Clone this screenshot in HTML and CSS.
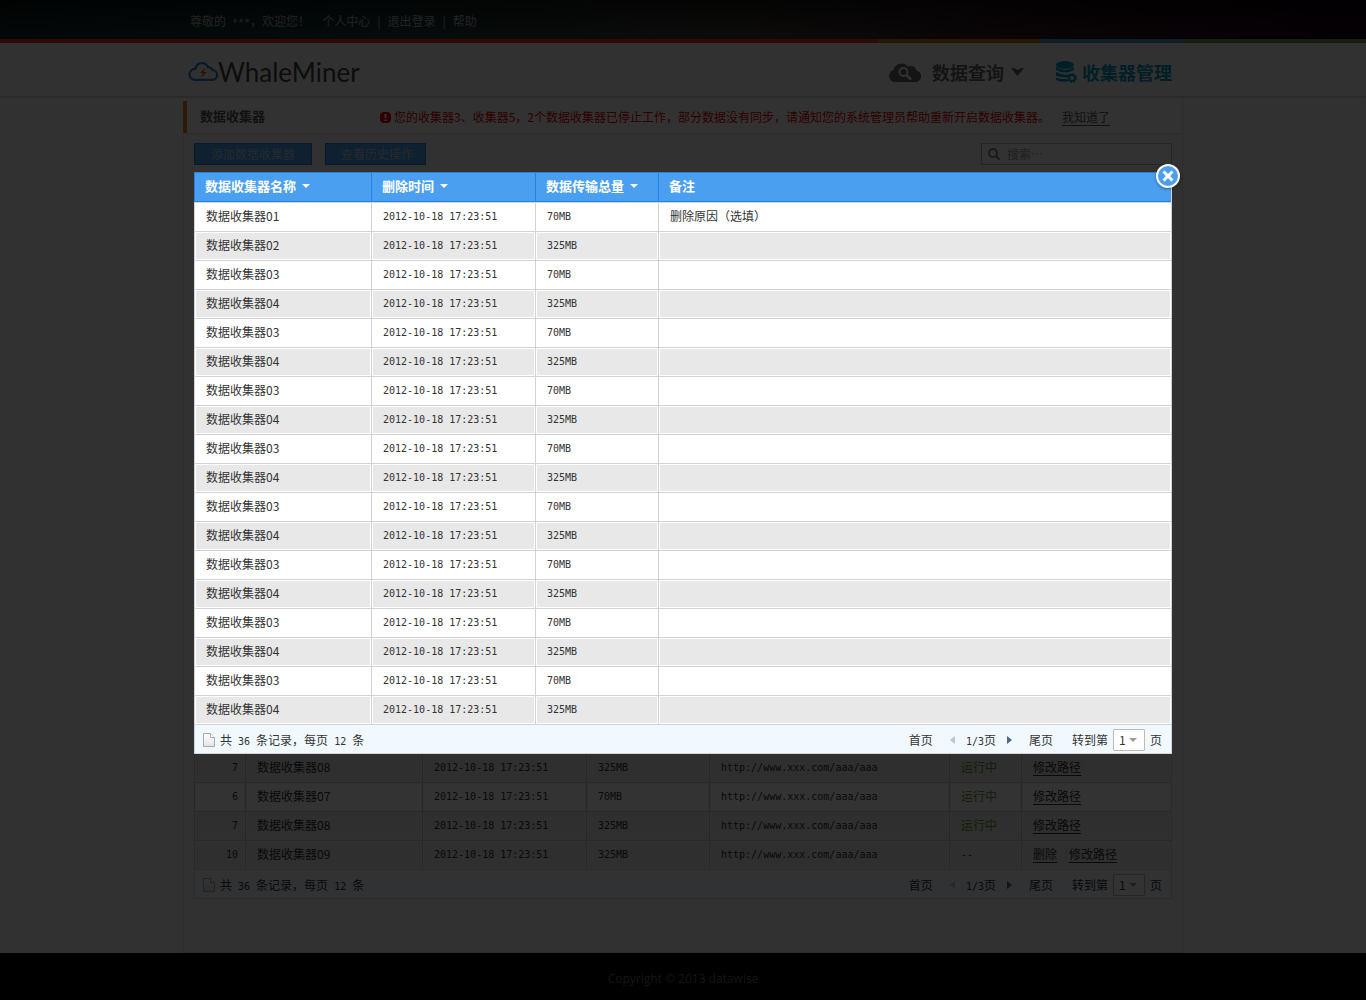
FILE: index.html
```html
<!DOCTYPE html>
<html lang="zh-CN">
<head>
<meta charset="utf-8">
<meta name="viewport" content="width=device-width, initial-scale=1">
<title>WhaleMiner</title>
<link rel="stylesheet" href="styles.css">
</head>
<body>
<svg class="defs" width="0" height="0" aria-hidden="true">
  <defs>
    <linearGradient id="paper" x1="0" y1="0" x2="0" y2="1"><stop offset="0" stop-color="#fff"/><stop offset="1" stop-color="#e4e4e4"/></linearGradient>
    <symbol id="page" viewBox="0 0 12 14"><path d="M.5.5h7l4 4v9H.5z" fill="url(#paper)" stroke="#a9a9a9"/><path d="M7.500.5v4h4" fill="#fff" stroke="#a9a9a9"/></symbol>
    <symbol id="down" viewBox="0 0 8 4"><path d="M0 0h8L4 4z" fill="currentColor"/></symbol>
    <symbol id="prev" viewBox="0 0 5 8"><path d="M5 0v8L0 4z" fill="currentColor"/></symbol>
    <symbol id="next" viewBox="0 0 5 8"><path d="M0 0v8l5-4z" fill="currentColor"/></symbol>
  </defs>
</svg>

<div class="topbar">
  <div class="wrap topbar-row">
    <span class="hello">尊敬的<span class="m"> ***</span>，欢迎您！</span>
    <a href="#">个人中心</a><span class="bar">|</span><a href="#">退出登录</a><span class="bar">|</span><a href="#">帮助</a>
  </div>
</div>

<header class="header">
  <div class="wrap header-row">
    <a class="logo" href="#">
      <svg width="30" height="21" viewBox="0 0 30 21" aria-hidden="true"><path d="M6.500 18.800h17.500a4.800 4.800 0 0 0 .5-9.600 5 5 0 0 0-4.500-3A6.500 6.500 0 0 0 7.500 7.800a5.500 5.500 0 0 0-1 11z" fill="none" stroke="#2f7dc0" stroke-width="2.200"/><path d="M17.500 6.500 12 12h3l-2.500 5L19 11h-3.500z" fill="#e8481c"/></svg>
      <span>WhaleMiner</span>
    </a>
    <nav class="nav">
      <a href="#">
        <svg width="35" height="20" viewBox="0 0 35 20" aria-hidden="true"><path d="M6 20a6.200 6.200 0 0 1-.5-12A8.300 8.300 0 0 1 20 4.500a5.800 5.800 0 0 1 8.500 4A6 6 0 0 1 29 20z" fill="currentColor"/><circle cx="15.500" cy="10" r="4" fill="none" stroke="#f5f5f5" stroke-width="2"/><path d="m18.500 13 4.500 4.500" stroke="#f5f5f5" stroke-width="2.600"/></svg>
        <span>数据查询</span>
        <svg width="13" height="8" viewBox="0 0 13 8" aria-hidden="true"><path d="M0 0h3l3.500 2L10 0h3L6.500 8z" fill="currentColor"/></svg>
      </a>
      <a class="current" href="#">
        <svg width="21" height="22" viewBox="0 0 21 22" aria-hidden="true"><g fill="currentColor"><ellipse cx="9" cy="4" rx="9" ry="4"/><path d="M0 6q9 6 18 0v3q-9 5-18 0zM0 11q8 4 15 2l-3 3q-7 1-12-1.500zM0 16.500q5 2 11 1.500l1 2.500q-8 1-12-1.500z"/></g><circle cx="16" cy="17" r="3" fill="none" stroke="currentColor" stroke-width="2"/><circle cx="16" cy="17" r="4.200" fill="none" stroke="currentColor" stroke-width="1.600" stroke-dasharray="1.650 1.650"/></svg>
        <span>收集器管理</span>
      </a>
    </nav>
  </div>
</header>

<main class="wrap main">
  <div class="title-row">
    <h1>数据收集器</h1>
    <p class="alert">
      <svg width="11" height="11" viewBox="0 0 11 11" aria-hidden="true"><rect width="11" height="11" rx="4" fill="#e60000"/><path d="M5.500 2v4M5.500 7.500v1.500" stroke="#fff" stroke-width="2"/></svg>
      <span>您的收集器3、收集器5，2个数据收集器已停止工作，部分数据没有同步，请通知您的系统管理员帮助重新开启数据收集器。</span>
    </p>
    <a class="know" href="#">我知道了</a>
  </div>

  <div class="toolbar">
    <button class="btn" type="button">添加数据收集器</button>
    <button class="btn" type="button">查看历史操作</button>
    <label class="search">
      <svg width="12" height="12" viewBox="0 0 12 12" aria-hidden="true"><circle cx="5" cy="5" r="4" fill="none" stroke="#777" stroke-width="1.800"/><path d="m8 8 3.500 3.500" stroke="#777" stroke-width="2"/></svg>
      <input type="search" placeholder="搜索…" aria-label="搜索">
    </label>
  </div>

  <section class="dialog" role="dialog" aria-modal="true">
    <button class="close" type="button" aria-label="关闭"><svg width="12" height="12" viewBox="0 0 12 12" aria-hidden="true"><path d="m1.500 1.500 9 9m0-9-9 9" stroke="#fff" stroke-width="3"/></svg></button>
    <table class="grid history">
      <colgroup><col class="c-name"><col class="c-date"><col class="c-size"><col></colgroup>
      <thead>
        <tr>
          <th><button type="button">数据收集器名称<svg width="8" height="4"><use href="#down"/></svg></button></th>
          <th><button type="button">删除时间<svg width="8" height="4"><use href="#down"/></svg></button></th>
          <th><button type="button">数据传输总量<svg width="8" height="4"><use href="#down"/></svg></button></th>
          <th>备注</th>
        </tr>
      </thead>
      <tbody>
        <tr><td>数据收集器01</td><td class="m">2012-10-18 17:23:51</td><td class="m">70MB</td><td>删除原因（选填）</td></tr>
        <tr><td>数据收集器02</td><td class="m">2012-10-18 17:23:51</td><td class="m">325MB</td><td></td></tr>
        <tr><td>数据收集器03</td><td class="m">2012-10-18 17:23:51</td><td class="m">70MB</td><td></td></tr>
        <tr><td>数据收集器04</td><td class="m">2012-10-18 17:23:51</td><td class="m">325MB</td><td></td></tr>
        <tr><td>数据收集器03</td><td class="m">2012-10-18 17:23:51</td><td class="m">70MB</td><td></td></tr>
        <tr><td>数据收集器04</td><td class="m">2012-10-18 17:23:51</td><td class="m">325MB</td><td></td></tr>
        <tr><td>数据收集器03</td><td class="m">2012-10-18 17:23:51</td><td class="m">70MB</td><td></td></tr>
        <tr><td>数据收集器04</td><td class="m">2012-10-18 17:23:51</td><td class="m">325MB</td><td></td></tr>
        <tr><td>数据收集器03</td><td class="m">2012-10-18 17:23:51</td><td class="m">70MB</td><td></td></tr>
        <tr><td>数据收集器04</td><td class="m">2012-10-18 17:23:51</td><td class="m">325MB</td><td></td></tr>
        <tr><td>数据收集器03</td><td class="m">2012-10-18 17:23:51</td><td class="m">70MB</td><td></td></tr>
        <tr><td>数据收集器04</td><td class="m">2012-10-18 17:23:51</td><td class="m">325MB</td><td></td></tr>
        <tr><td>数据收集器03</td><td class="m">2012-10-18 17:23:51</td><td class="m">70MB</td><td></td></tr>
        <tr><td>数据收集器04</td><td class="m">2012-10-18 17:23:51</td><td class="m">325MB</td><td></td></tr>
        <tr><td>数据收集器03</td><td class="m">2012-10-18 17:23:51</td><td class="m">70MB</td><td></td></tr>
        <tr><td>数据收集器04</td><td class="m">2012-10-18 17:23:51</td><td class="m">325MB</td><td></td></tr>
        <tr><td>数据收集器03</td><td class="m">2012-10-18 17:23:51</td><td class="m">70MB</td><td></td></tr>
        <tr><td>数据收集器04</td><td class="m">2012-10-18 17:23:51</td><td class="m">325MB</td><td></td></tr>
      </tbody>
    </table>
    <div class="pager">
      <svg width="12" height="14" aria-hidden="true"><use href="#page"/></svg>
      <span class="count">共<span class="m"> 36 </span>条记录，每页<span class="m"> 12 </span>条</span>
      <a href="#">首页</a>
      <a class="prev" href="#" aria-label="上一页"><svg width="5" height="8"><use href="#prev"/></svg></a>
      <span><span class="m">1/3</span>页</span>
      <a class="next" href="#" aria-label="下一页"><svg width="5" height="8"><use href="#next"/></svg></a>
      <a href="#">尾页</a>
      <label class="jump">转到第 <span class="pick"><select><option>1</option></select><svg width="8" height="4"><use href="#down"/></svg></span> 页</label>
    </div>
  </section>

  <section class="collectors">
    <table class="grid">
      <colgroup><col class="c-no"><col class="c-name"><col class="c-date"><col class="c-size"><col><col class="c-state"><col class="c-act"></colgroup>
      <tbody>
        <tr><td class="m no">7</td><td>数据收集器08</td><td class="m">2012-10-18 17:23:51</td><td class="m">325MB</td><td class="m">http://www.xxx.com/aaa/aaa</td><td class="on">运行中</td><td><a href="#">修改路径</a></td></tr>
        <tr><td class="m no">6</td><td>数据收集器07</td><td class="m">2012-10-18 17:23:51</td><td class="m">70MB</td><td class="m">http://www.xxx.com/aaa/aaa</td><td class="on">运行中</td><td><a href="#">修改路径</a></td></tr>
        <tr><td class="m no">7</td><td>数据收集器08</td><td class="m">2012-10-18 17:23:51</td><td class="m">325MB</td><td class="m">http://www.xxx.com/aaa/aaa</td><td class="on">运行中</td><td><a href="#">修改路径</a></td></tr>
        <tr><td class="m no">10</td><td>数据收集器09</td><td class="m">2012-10-18 17:23:51</td><td class="m">325MB</td><td class="m">http://www.xxx.com/aaa/aaa</td><td class="m">--</td><td><a href="#">删除</a><a href="#">修改路径</a></td></tr>
      </tbody>
    </table>
    <div class="pager">
      <svg width="12" height="14" aria-hidden="true"><use href="#page"/></svg>
      <span class="count">共<span class="m"> 36 </span>条记录，每页<span class="m"> 12 </span>条</span>
      <a href="#">首页</a>
      <a class="prev" href="#" aria-label="上一页"><svg width="5" height="8"><use href="#prev"/></svg></a>
      <span><span class="m">1/3</span>页</span>
      <a class="next" href="#" aria-label="下一页"><svg width="5" height="8"><use href="#next"/></svg></a>
      <a href="#">尾页</a>
      <label class="jump">转到第 <span class="pick"><select><option>1</option></select><svg width="8" height="4"><use href="#down"/></svg></span> 页</label>
    </div>
  </section>
</main>

<footer class="footer">Copyright © 2013 datawise</footer>
<div class="backdrop"></div>
</body>
</html>
```
FILE: styles.css
```css
* { box-sizing: border-box; }

body {
  margin: 0;
  min-height: 100vh;
  display: flex;
  flex-direction: column;
  background: #f5f5f5;
  color: #333;
  font: 12px/20px "Noto Sans CJK SC", sans-serif;
}

h1, p { margin: 0; }
a { color: inherit; text-decoration: none; }
button, input, select { font: inherit; color: inherit; margin: 0; }
svg { display: block; flex: none; }
.defs { position: absolute; }
.wrap { width: 100%; max-width: 1000px; margin: 0 auto; }
.m { font-family: "DejaVu Sans Mono", monospace; font-size: 10px; white-space: pre; }
span.m { line-height: 12px; }

/* page chrome */
.topbar {
  height: 39px;
  background: linear-gradient(rgba(0, 0, 0, .6), transparent), linear-gradient(90deg, #102828, #183c3c 25%, #403c34 55%, #341820 75%, #1c001c);
  color: #aaa;
}
.topbar-row { display: flex; gap: 7px; padding: 11px 7px 0; }
.hello { margin-right: 5px; }

.header {
  position: relative;
  height: 57px;
  background: #f5f5f5;
  border-top: 4px solid;
  border-image: linear-gradient(90deg, #e63219 calc(50% + 194px), #c07820 calc(50% + 194px), #c07820 calc(50% + 356px), #4c9cc0 calc(50% + 356px), #4c9cc0 calc(50% + 500px), #6c9c3c calc(50% + 500px)) 4;
  box-shadow: 0 1px 3px rgba(0, 0, 0, .25);
}
.header-row { display: flex; align-items: center; justify-content: space-between; height: 51px; padding: 6px 11px 0 5px; }
.logo { display: flex; align-items: center; font: 26px/32px Lato, sans-serif; color: #444; }
.nav { display: flex; gap: 32px; }
.nav a { display: flex; align-items: center; gap: 7px; font-size: 18px; font-weight: 700; color: #666; }
.nav a > :first-child { margin-right: 2px; }
.nav .current { color: #0098c0; gap: 3px; }

.main { padding: 1px 0 53px; border: 1px solid #ddd; border-width: 0 1px 1px; }
.title-row {
  display: flex;
  align-items: center;
  height: 38px;
  margin-left: -1px;
  padding: 4px 72px 0 0;
  background: #f9f9f9;
  border-bottom: 2px solid #e4e4e4;
}
.title-row h1 { height: 32px; margin-right: 115px; padding-left: 13px; border-left: 4px solid #dc8420; font-size: 13px; line-height: 30px; color: #556; }
.alert { display: flex; align-items: center; gap: 3px; color: #e60000; white-space: nowrap; }
.know { margin-left: auto; color: #556; text-decoration: underline; text-underline-offset: 3px; }

.toolbar { display: flex; gap: 13px; padding: 8px 10px 7px; }
.btn { height: 22px; padding: 0 16px; border: 1px solid #2583dc; background: #4a9ff0; color: #b8d0e8; line-height: 20px; }
.btn + .btn { padding: 0 12px 0 15px; }
.search { display: flex; align-items: center; gap: 7px; width: 191px; height: 22px; margin-left: auto; padding: 0 6px; border: 1px solid #bbb; background: #f9f9f9; }
.search input { flex: 1; min-width: 0; height: 20px; padding: 0; border: 0; outline: 0; background: none; }
.search input::placeholder { color: #999; opacity: 1; }

/* data tables */
.grid { width: 100%; table-layout: fixed; border-collapse: separate; border-spacing: 0; border-right: 1px solid #d0d4d8; }
.c-no { width: 51px; }
.c-name { width: 177px; }
.c-date { width: 164px; }
.c-size { width: 123px; }
.c-state { width: 72px; }
.c-act { width: 150px; }
.grid td { height: 29px; padding: 0 11px 2px; border: 1px solid #d0d4d8; border-width: 1px 0 0 1px; line-height: 20px; text-align: left; }
.grid .m { padding-bottom: 0; }
.grid tr:nth-child(even) td { background: #e8e8e8; box-shadow: inset 0 0 0 1px #fff; }
.grid .no { padding-right: 7px; text-align: right; }
.grid .on { color: #5a9a2c; }
.grid td a { margin-right: 12px; text-decoration: underline; text-underline-offset: 3px; }
.grid td a:last-child { margin-right: 0; }
.grid th {
  height: 30px;
  padding: 0 10px 2px;
  background: #4a9ff0;
  border: 1px solid #2583dc;
  border-width: 1px 0 1px 1px;
  color: #fff;
  font-size: 13px;
  font-weight: 700;
  line-height: 20px;
  text-align: left;
}
.grid th button { display: flex; align-items: center; gap: 6px; padding: 0; border: 0; background: none; font-weight: 700; }

.pager { display: flex; align-items: center; height: 30px; padding: 1px 9px 0 8px; border: 1px solid #d0d4d8; background: #f1f9fe; white-space: nowrap; }
.count { margin: 0 auto 0 5px; }
.prev { margin: 0 11px 0 17px; color: #c0c4c8; }
.next { margin: 0 17px 0 11px; color: #4c6888; }
.jump { display: flex; align-items: center; gap: 5px; margin-left: 19px; }
.pick { display: grid; align-items: center; width: 32px; height: 22px; }
.pick select { grid-area: 1 / 1; width: 32px; height: 22px; padding: 0 5px; border: 1px solid #bbb; border-radius: 1px; background: #fff; appearance: none; }
.pick svg { grid-area: 1 / 1; margin-left: 16px; color: #999; pointer-events: none; }

/* dialog above the dimmed page */
.dialog { position: relative; z-index: 2; margin: 0 10px; background: #fff; }
.close {
  position: absolute;
  top: -8px;
  right: -8px;
  display: grid;
  place-items: center;
  width: 24px;
  height: 24px;
  padding: 0;
  border: 2px solid #fff;
  border-radius: 50%;
  background: #4a9ff0;
  box-shadow: 0 1px 3px rgba(0, 0, 0, .4);
}
.backdrop { position: fixed; inset: 0; z-index: 1; background: rgba(0, 0, 0, .8); }

.collectors { margin: 0 10px; background: #fff; }
.collectors tr:first-child td { height: 28px; border-top: 0; }
.collectors .grid tr td { background: #e8e8e8; border-color: #c4c8cc; box-shadow: inset 0 0 0 1px #f4f4f4; }
.collectors .grid tr:nth-child(2) td { background: #fff; }

.footer { flex: 1; padding: 16px; background: #000; color: #666; font-family: "Open Sans", sans-serif; text-align: center; }
```
